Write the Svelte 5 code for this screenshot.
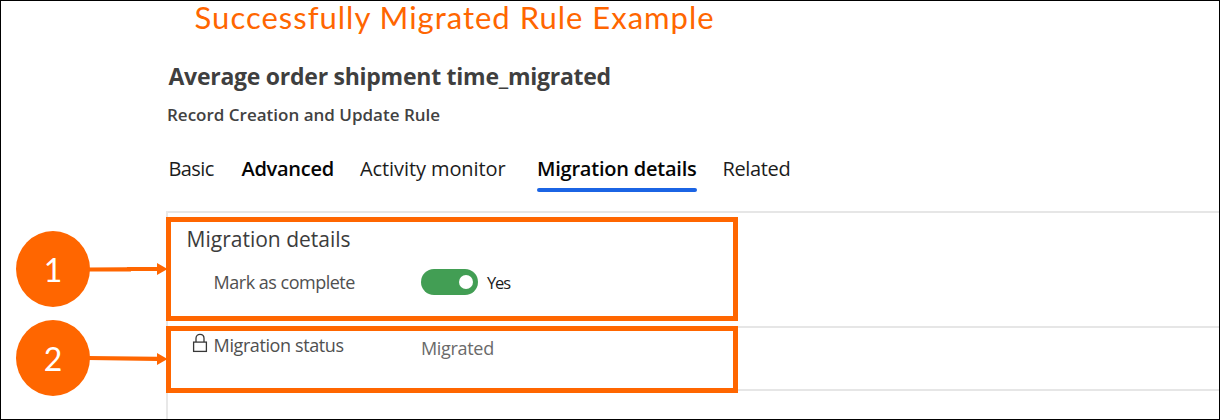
<script>
  const tabs = [
    { label: 'Basic', spacing: -0.6, left: 168.5, bold: false },
    { label: 'Advanced', spacing: -0.28, left: 241.5, bold: true },
    { label: 'Activity monitor', spacing: -0.09, left: 360, bold: false },
    { label: 'Migration details', spacing: -0.22, left: 537, bold: true, active: true },
    { label: 'Related', spacing: -0.35, left: 722.5, bold: false }
  ];
  const columns = tabs
    .map((t, i) => (i < tabs.length - 1 ? `${tabs[i + 1].left - t.left}px` : 'auto'))
    .join(' ');
</script>

<main class="frame">
  <div class="banner">Successfully Migrated Rule Example</div>
  <header>
    <h1>Average order shipment time_migrated</h1>
    <p>Record Creation and Update Rule</p>
  </header>
  <nav style:grid-template-columns={columns}>
    {#each tabs as tab}
      <span class="tab" class:bold={tab.bold} class:active={tab.active} style:letter-spacing="{tab.spacing}px">{tab.label}</span>
    {/each}
  </nav>

  <section class="panel">
    <div class="group first">
      <h2>Migration details</h2>
      <div class="row">
        <span class="label mark">Mark as complete</span>
        <span class="toggle"><i></i></span>
        <span class="yes">Yes</span>
      </div>
    </div>
    <div class="group second">
      <svg class="lock" width="16" height="20" viewBox="0 0 16 20" fill="none" stroke="#383838" stroke-width="1.3">
        <rect x="1.6" y="9.1" width="12.8" height="9.3" />
        <path d="M4 9V5.3C4 2.9 5.7 1.3 8 1.3s4 1.6 4 4V9" />
      </svg>
      <span class="label status">Migration status</span>
      <span class="value">Migrated</span>
    </div>
    <div class="group third"></div>
  </section>

  <div class="box one"></div>
  <div class="box two"></div>
  <svg class="arrows" width="90" height="120" viewBox="84 256 90 120" fill="#ff6600">
    <path d="M88 267.5L127 267.3V267H157V263L167.5 269L157 275V271H131V271.5H88zM88 356L157 356.8V353L167.5 359L157 365V361L88 360z" />
  </svg>
  <div class="badge b1">1</div>
  <div class="badge b2">2</div>
</main>

<style>
  :global(body) { background: #fff; }
  .frame {
    position: relative;
    box-sizing: border-box;
    width: 1220px;
    height: 420px;
    overflow: hidden;
    background: #fff;
    font-family: "Open Sans", "Noto Sans", sans-serif;
    white-space: nowrap;
  }
  .frame::after {
    content: "";
    position: absolute;
    inset: 0;
    border: 1px solid #000;
  }
  .banner {
    padding-left: 194.6px;
    height: 36px;
    font: 31px/34px Lato, sans-serif;
    letter-spacing: 1px;
    color: #ff6600;
  }
  header { padding: 24px 0 0 168.5px; }
  h1 {
    margin: 0;
    font-size: 23px;
    font-weight: 700;
    line-height: 32px;
    letter-spacing: -0.26px;
    color: #3f3f3f;
  }
  p {
    margin: 10px 0 0 -1.5px;
    font-size: 17px;
    font-weight: 600;
    line-height: 25px;
    color: #424242;
  }
  nav {
    display: grid;
    box-sizing: border-box;
    height: 84px;
    padding: 28px 0 0 168.5px;
    justify-content: start;
    align-items: start;
  }
  .tab {
    justify-self: start;
    font-size: 20px;
    line-height: 28px;
    color: #1c1c1c;
  }
  .bold { font-weight: 600; color: #050505; }
  .active::after {
    content: "";
    display: block;
    width: 160px;
    height: 4px;
    margin-top: 4.5px;
    border-radius: 2px;
    background: #1b64e4;
  }
  .panel {
    box-sizing: border-box;
    height: 209px;
    margin-left: 166px;
    border-left: 2px solid #e8e8e8;
  }
  .group { box-sizing: border-box; border-top: 2px solid #e6e6e6; }
  .first { height: 115px; padding: 11px 0 0 18px; }
  .second { display: flex; height: 63px; padding: 4px 0 0 24px; }
  .third { height: 31px; }
  h2 {
    margin: 0;
    padding-left: 0.6px;
    font-size: 21px;
    font-weight: 400;
    line-height: 30px;
    color: #3c3c3c;
  }
  .row { display: flex; margin-top: 15px; padding-left: 27.6px; }
  .label, .value { font-size: 18px; line-height: 26px; color: #505050; }
  .label { width: 207.4px; }
  .mark { letter-spacing: -0.5px; }
  .status { letter-spacing: -0.4px; }
  .value { margin-top: 3px; letter-spacing: -0.32px; color: #6a6a6a; }
  .lock { margin: 1px 5.6px 0 0; }
  .toggle {
    display: flex;
    box-sizing: border-box;
    width: 57px;
    height: 26px;
    padding: 6px 5px;
    justify-content: flex-end;
    border-radius: 13px;
    background: #429e54;
  }
  .toggle i { width: 14px; height: 14px; border-radius: 50%; background: #fff; }
  .yes {
    margin-left: 9px;
    font-size: 16.5px;
    line-height: 28px;
    letter-spacing: -1.1px;
    color: #1a1a1a;
  }
  .box {
    position: absolute;
    box-sizing: border-box;
    left: 166px;
    width: 572px;
    border: 5px solid #ff6600;
  }
  .one { top: 217px; height: 104px; }
  .two { top: 326px; height: 67px; }
  .arrows { position: absolute; left: 84px; top: 256px; }
  .badge {
    position: absolute;
    left: 16px;
    width: 74px;
    height: 76px;
    border-radius: 50%;
    background: #ff6600;
    color: #fff;
    font: 32px/78px Lato, sans-serif;
    text-align: center;
  }
  .b1 { top: 231px; }
  .b2 { top: 320px; }
</style>
